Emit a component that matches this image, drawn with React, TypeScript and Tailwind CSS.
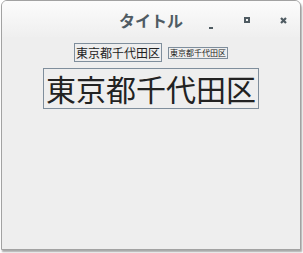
import React from "react";

const jp = { fontFamily: '"Noto Sans CJK JP", "Noto Sans", sans-serif' };

export default function App() {
  return (
    <div className="w-[303px] h-[253px] bg-white" style={jp}>
      <div className="ml-px w-[300px] h-[250px] flex flex-col rounded-t-[6px] border border-[#a2a2a2] shadow-[1px_2px_2px_rgba(0,0,0,0.35)] overflow-hidden bg-[#eeeeee]">
        {/* title bar */}
        <div className="relative h-[36px] shrink-0 flex items-center justify-center bg-gradient-to-b from-[#fcfcfc] to-[#efefef]">
          <span className="text-[16px] font-bold text-[#4f5b63] leading-none mt-[2px]">タイトル</span>
          <div className="absolute left-[207px] top-[26px] w-[4px] h-[2px] bg-[#4f5b62]" />
          <div className="absolute left-[242px] top-[16px] w-[6px] h-[6px] border-2 border-[#4f5b62]" />
          <svg className="absolute left-[278px] top-[16px]" width="7" height="7" viewBox="0 0 7 7">
            <path d="M1 1L6 6M6 1L1 6" stroke="#4f5b62" strokeWidth="2.2" />
          </svg>
        </div>

        {/* content */}
        <div className="flex-1 flex flex-col items-center pt-[6px]">
          <div className="flex items-center gap-[6px]">
            <span className="border border-[#7f8e9c] text-[12px] leading-[17px] text-[#222] px-px">東京都千代田区</span>
            <span className="border border-[#7f8e9c] text-[8px] leading-[10px] text-[#222] px-px">東京都千代田区</span>
          </div>
          <span className="mt-[6px] border border-[#7f8e9c] text-[30px] leading-[39px] text-[#222] px-[2px]">東京都千代田区</span>
        </div>
      </div>
    </div>
  );
}
